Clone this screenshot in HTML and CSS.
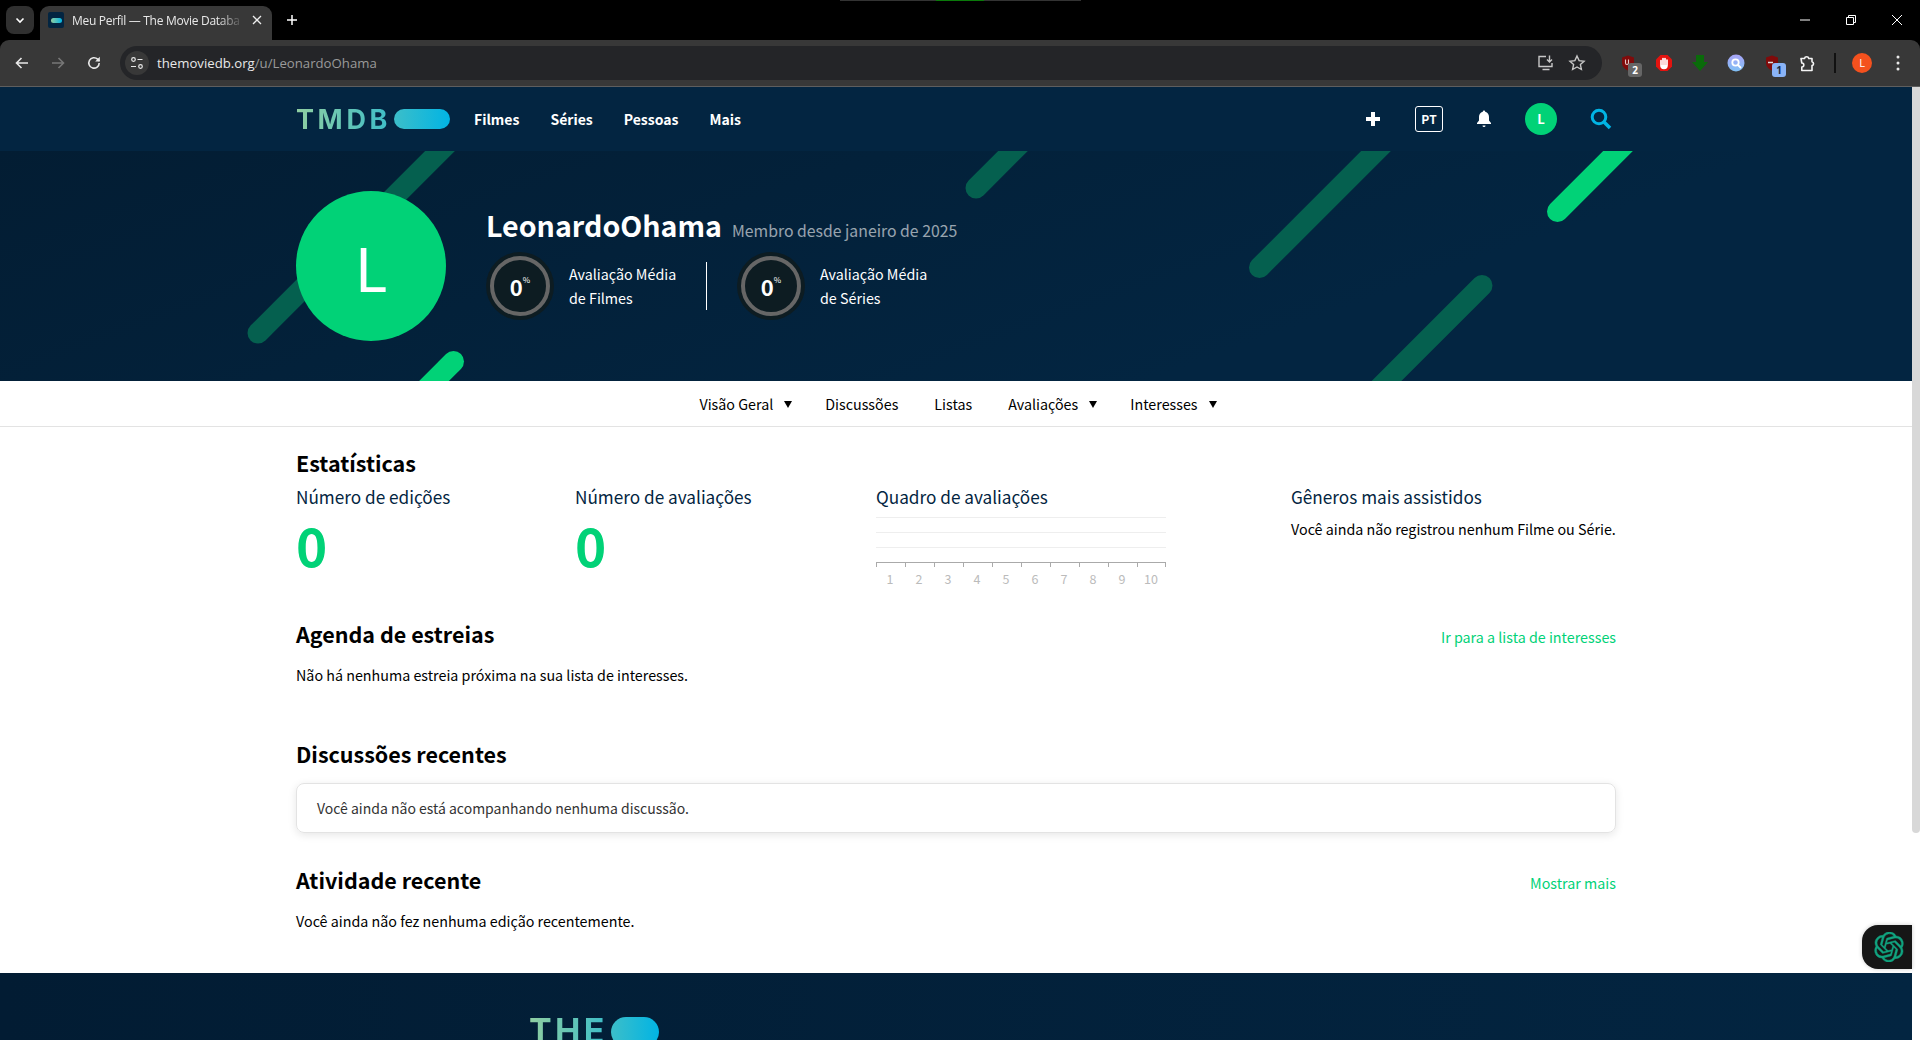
FILE: index.html
```html
<!DOCTYPE html>
<html lang="pt"><head>
<meta charset="utf-8">
<title>Meu Perfil — The Movie Database</title>
<link rel="stylesheet" href="styles.css">
</head>
<body>
<div class="browser">
	<div class="tabstrip">
		<div class="captionline"><i></i></div>
		<div class="tabsearch"><svg width="12" height="12" viewBox="0 0 12 12"><path d="M2.500 4.500 6 8l3.500-3.500" fill="none" stroke="#fff" stroke-width="1.600"/></svg></div>
		<div class="tab">
			<span class="favicon"><i></i></span>
			<span class="tabtitle">Meu Perfil — The Movie Databa</span>
			<svg width="10" height="10" viewBox="0 0 10 10"><path d="M1 1l8 8M9 1l-8 8" stroke="#eee" stroke-width="1.300"/></svg>
		</div>
		<svg class="newtab" width="12" height="12" viewBox="0 0 12 12"><path d="M6 1v10M1 6h10" stroke="#fff" stroke-width="1.500"/></svg>
		<div class="winbtns">
			<svg width="12" height="12" viewBox="0 0 12 12"><path d="M1 6h10" stroke="#fff"/></svg>
			<svg width="12" height="12" viewBox="0 0 12 12"><path d="M1.500 3.500h7v7h-7zM3.500 3.500v-2h7v7h-2" fill="none" stroke="#fff"/></svg>
			<svg width="12" height="12" viewBox="0 0 12 12"><path d="M1 1l10 10M11 1L1 11" stroke="#fff"/></svg>
		</div>
	</div>
	<div class="toolbar">
		<svg class="tbicon" width="16" height="16" viewBox="0 0 16 16"><path d="M14 8H3M7.500 3 2.500 8l5 5" fill="none" stroke="#e8e8e8" stroke-width="1.600"/></svg>
		<svg class="tbicon" width="16" height="16" viewBox="0 0 16 16"><path d="M2 8h11M8.500 3l5 5-5 5" fill="none" stroke="#777" stroke-width="1.600"/></svg>
		<svg class="tbicon" width="16" height="16" viewBox="0 0 16 16"><path d="M13.200 8A5.200 5.200 0 1 1 11.600 4.200L13.400 6" fill="none" stroke="#e8e8e8" stroke-width="1.600"/><path d="M13.800 1.800v4.600H9.200z" fill="#e8e8e8"/></svg>
		<div class="omnibox">
			<span class="siteinfo"><svg width="14" height="14" viewBox="0 0 14 14" fill="none" stroke="#e8e8e8" stroke-width="1.200"><circle cx="3.500" cy="3.500" r="1.800"/><path d="M7.500 3.500h5M1 10.500h5"/><circle cx="10.500" cy="10.500" r="1.800"/></svg></span>
			<span class="url">themoviedb.org<span class="urlpath">/u/LeonardoOhama</span></span>
			<svg class="omni-r" width="18" height="18" viewBox="0 0 18 18" fill="none" stroke="#c7c7c7" stroke-width="1.400"><path d="M9 2.500H2v10h13V9M5.500 15.500h7M12.500 1.500v6M10 5.500l2.500 2.500L15 5.500"/></svg>
			<svg class="omni-r" width="18" height="18" viewBox="0 0 18 18"><path d="M9 2l2.100 4.600 5 .6-3.700 3.400 1 4.900L9 13l-4.400 2.500 1-4.900L1.900 7.200l5-.6z" fill="none" stroke="#c7c7c7" stroke-width="1.400"/></svg>
		</div>
		<div class="extensions">
			<span class="ext">
				<svg width="14" height="16" viewBox="0 0 14 16"><path d="M7 .5l6 2v5.500c0 3.500-2.800 6-6 7.500-3.200-1.500-6-4-6-7.500V2.500z" fill="#800b0b"/><path d="M4.500 4.500v3.500a1.500 1.500 0 0 0 3 0V4.500" fill="none" stroke="#e6c9c9" stroke-width="1.100"/></svg>
				<b class="badge grey">2</b>
			</span>
			<span class="ext">
				<svg width="18" height="18" viewBox="0 0 18 18"><path d="M5.500 1h7L17 5.500v7L12.500 17h-7L1 12.500v-7z" fill="#e3130f"/><path d="M6 12V6.500M8 11V4.500M10 11V4.500M12 11.500V6M6 11c0 3 1.500 3.500 3 3.500s3-1 3-3.500" stroke="#fff" stroke-width="1.700" fill="#fff" stroke-linecap="round"/></svg>
			</span>
			<span class="ext">
				<svg width="18" height="18" viewBox="0 0 18 18"><path d="M5 1h8v7h4l-8 9-8-9h4z" fill="#0a6b0a"/></svg>
			</span>
			<span class="ext">
				<svg width="18" height="18" viewBox="0 0 18 18"><defs><linearGradient id="qg" x1="0" y1="0" x2="0" y2="1"><stop offset="0" stop-color="#a9a4f7"/><stop offset="1" stop-color="#7fc0f5"/></linearGradient></defs><circle cx="9" cy="9" r="8.500" fill="url(#qg)"/><circle cx="8.500" cy="8.500" r="3.200" fill="none" stroke="#fff" stroke-width="1.800"/><path d="M11 11l3 3" stroke="#fff" stroke-width="1.800"/></svg>
			</span>
			<span class="ext">
				<svg width="14" height="16" viewBox="0 0 14 16"><path d="M7 .5l6 2v5.500c0 3.500-2.800 6-6 7.500-3.200-1.500-6-4-6-7.500V2.500z" fill="#800b0b"/><path d="M3 7.500h5" stroke="#ddd" stroke-width="1.500"/></svg>
				<b class="badge blue">1</b>
			</span>
			<span class="ext">
				<svg width="18" height="18" viewBox="0 0 18 18"><path d="M2 4.500h3.500a2.200 2.200 0 0 1 4.300 0H13v3.200a2 2 0 0 1 0 3.900v4.900H2.800v-3.500a2 2 0 0 0 0-4z" fill="none" stroke="#f4f4f4" stroke-width="1.600" stroke-linejoin="round"/></svg>
			</span>
		</div>
		<i class="tbsep"></i>
		<span class="profile">L</span>
		<svg class="kebab" width="4" height="16" viewBox="0 0 4 16"><circle cx="2" cy="2" r="1.500" fill="#e8e8e8"/><circle cx="2" cy="8" r="1.500" fill="#e8e8e8"/><circle cx="2" cy="14" r="1.500" fill="#e8e8e8"/></svg>
	</div>
</div>

<div class="viewport">
	<div class="page">
		<header class="topnav">
			<div class="wrap navrow">
				<div class="logo"><span class="logotext">TMDB</span><i class="pill"></i></div>
				<nav class="mainlinks">
					<a>Filmes</a><a>Séries</a><a>Pessoas</a><a>Mais</a>
				</nav>
				<div class="navright">
					<svg class="plus" width="16" height="16" viewBox="0 0 16 16"><path d="M8 1v14M1 8h14" stroke="#fff" stroke-width="4"/></svg>
					<span class="lang">PT</span>
					<svg class="bell" width="16" height="20" viewBox="0 0 16 20"><path d="M8 1.500c.8 0 1.200.6 1.200 1.300C11.800 3.400 13 5.500 13 8v3.500l2 2.500v1H1v-1l2-2.500V8c0-2.500 1.200-4.600 3.800-5.200 0-.7.400-1.300 1.200-1.300z" fill="#fff"/><path d="M6.500 16.500h3a1.500 1.500 0 0 1-3 0z" fill="#fff"/></svg>
					<span class="navavatar">L</span>
					<svg class="lens" width="22" height="22" viewBox="0 0 22 22"><circle cx="9" cy="9" r="6.800" fill="none" stroke="#01b4e4" stroke-width="3"/><path d="M14 14l6 6" stroke="#01b4e4" stroke-width="3.500"/></svg>
				</div>
			</div>
		</header>

		<section class="hero">
			<svg class="stripes" width="1912" height="230" viewBox="0 0 1912 230">
				<g stroke="#05604f" stroke-width="21" stroke-linecap="round">
					<path d="M470 -30 258 182"/>
					<path d="M1043 -30 976 37"/>
					<path d="M1406 -30 1259.500 116.500"/>
					<path d="M1482 134.500 1362 254.500"/>
				</g>
				<g stroke="#01d277" stroke-width="21" stroke-linecap="round">
					<path d="M1648 -30 1557.500 60.500"/>
					<path d="M453.500 210.500 413.500 250.500"/>
				</g>
			</svg>
			<div class="wrap herorow">
				<div class="bigavatar">L</div>
				<div class="heroinfo">
					<div class="herotitle"><h2>LeonardoOhama</h2><span>Membro desde janeiro de 2025</span></div>
					<div class="scores">
						<div class="score">
							<div class="ring"><div class="ringin">0<sup>%</sup></div></div>
							<div class="scorelabel">Avaliação Média<br>de Filmes</div>
						</div>
						<div class="score second">
							<div class="ring"><div class="ringin">0<sup>%</sup></div></div>
							<div class="scorelabel">Avaliação Média<br>de Séries</div>
						</div>
					</div>
				</div>
			</div>
		</section>

		<nav class="subnav">
			<a class="drop">Visão Geral</a>
			<a>Discussões</a>
			<a>Listas</a>
			<a class="drop">Avaliações</a>
			<a class="drop">Interesses</a>
		</nav>

		<main class="wrap content">
			<h3>Estatísticas</h3>
			<div class="stats">
				<div class="stat col1"><h4>Número de edições</h4><div class="bignum">0</div></div>
				<div class="stat col2"><h4>Número de avaliações</h4><div class="bignum">0</div></div>
				<div class="stat col3">
					<h4>Quadro de avaliações</h4>
					<div class="chart">
						<i></i><i></i><i></i>
						<div class="axis"><span>1</span><span>2</span><span>3</span><span>4</span><span>5</span><span>6</span><span>7</span><span>8</span><span>9</span><span>10</span></div>
					</div>
				</div>
				<div class="stat col4"><h4>Gêneros mais assistidos</h4><p>Você ainda não registrou nenhum Filme ou Série.</p></div>
			</div>

			<div class="sechead agenda"><h3>Agenda de estreias</h3><a>Ir para a lista de interesses</a></div>
			<p class="line">Não há nenhuma estreia próxima na sua lista de interesses.</p>

			<h3 class="disc">Discussões recentes</h3>
			<div class="card">Você ainda não está acompanhando nenhuma discussão.</div>

			<div class="sechead activity"><h3>Atividade recente</h3><a>Mostrar mais</a></div>
			<p class="line">Você ainda não fez nenhuma edição recentemente.</p>
		</main>

		<footer class="footer">
			<div class="footlogo"><span class="logotext">THE</span><i class="pill"></i></div>
		</footer>
	</div>
	<div class="scrollbar"><i></i></div>
	<div class="assistant">
		<svg width="30" height="30" viewBox="0 0 24 24"><path fill="#10a37f" stroke="#10a37f" stroke-width=".3" transform="rotate(15 12 12)" d="M22.2819 9.8211a5.9847 5.9847 0 0 0-.5157-4.9108 6.0462 6.0462 0 0 0-6.5098-2.9A6.0651 6.0651 0 0 0 4.9807 4.1818a5.9847 5.9847 0 0 0-3.9977 2.9 6.0462 6.0462 0 0 0 .7427 7.0966 5.98 5.98 0 0 0 .511 4.9107 6.051 6.051 0 0 0 6.5146 2.9001A5.9847 5.9847 0 0 0 13.2599 24a6.0557 6.0557 0 0 0 5.7718-4.2058 5.9894 5.9894 0 0 0 3.9977-2.9001 6.0557 6.0557 0 0 0-.7475-7.0729zm-9.022 12.6081a4.4755 4.4755 0 0 1-2.8764-1.0408l.1419-.0804 4.7783-2.7582a.7948.7948 0 0 0 .3927-.6813v-6.7369l2.02 1.1686a.071.071 0 0 1 .038.052v5.5826a4.504 4.504 0 0 1-4.4945 4.4944zm-9.6607-4.1254a4.4708 4.4708 0 0 1-.5346-3.0137l.142.0852 4.783 2.7582a.7712.7712 0 0 0 .7806 0l5.8428-3.3685v2.3324a.0804.0804 0 0 1-.0332.0615L9.74 19.9502a4.4992 4.4992 0 0 1-6.1408-1.6464zM2.3408 7.8956a4.485 4.485 0 0 1 2.3655-1.9728V11.6a.7664.7664 0 0 0 .3879.6765l5.8144 3.3543-2.0201 1.1685a.0757.0757 0 0 1-.071 0l-4.8303-2.7865A4.504 4.504 0 0 1 2.3408 7.872zm16.5963 3.8558L13.1038 8.364 15.1192 7.2a.0757.0757 0 0 1 .071 0l4.8303 2.7913a4.4944 4.4944 0 0 1-.6765 8.1042v-5.6772a.79.79 0 0 0-.407-.667zm2.0107-3.0231l-.142-.0852-4.7735-2.7818a.7759.7759 0 0 0-.7854 0L9.409 9.2297V6.8974a.0662.0662 0 0 1 .0284-.0615l4.8303-2.7866a4.4992 4.4992 0 0 1 6.6802 4.66zM8.3065 12.863l-2.02-1.1638a.0804.0804 0 0 1-.038-.0567V6.0742a4.4992 4.4992 0 0 1 7.3757-3.4537l-.142.0805L8.704 5.459a.7948.7948 0 0 0-.3927.6813zm1.0976-2.3654l2.602-1.4998 2.6069 1.4998v2.9994l-2.5974 1.4997-2.6067-1.4997Z"/></svg>
	</div>
</div>
</body></html>
```

FILE: styles.css
```css
*{box-sizing:border-box;}
html,body{margin:0;padding:0;height:100%;overflow:hidden;background:#fff;}
body{font-family:"Noto Sans CJK SC","Noto Sans",sans-serif;font-size:14.300px;color:#000;}
h2,h3,h4,p{margin:0;}

/* browser chrome */
.browser{height:87px;background:#000;font-family:"Open Sans","Noto Sans",sans-serif;border-bottom:1px solid #5e5e5e;}
.tabstrip{height:40px;display:flex;align-items:flex-end;padding-left:6px;position:relative;}
.captionline{position:absolute;left:840px;top:0;width:241px;height:1px;background:#333;}
.captionline i{display:block;width:48px;height:1px;margin-left:96px;background:#0a7a0a;}
.tabsearch{width:28px;height:28px;margin-bottom:6px;background:#303030;border-radius:8px;display:flex;align-items:center;justify-content:center;}
.tab{width:232px;height:34px;margin-left:6px;background:#383838;border-radius:9px 9px 0 0;display:flex;align-items:center;padding:0 10px 6px 8px;color:#e8e8e8;font-size:12px;}
.favicon{width:16px;height:16px;background:#032541;border-radius:2px;display:flex;align-items:center;justify-content:center;margin-right:8px;flex:none;}
.favicon i{width:11px;height:5px;border-radius:3px;background:linear-gradient(90deg,#90cea1,#01b4e4);}
.tabtitle{flex:1;white-space:nowrap;overflow:hidden;letter-spacing:-.3px;-webkit-mask-image:linear-gradient(90deg,#000 85%,transparent);mask-image:linear-gradient(90deg,#000 85%,transparent);margin-right:8px;}
.newtab{margin:0 0 14px 14px;}
.winbtns{margin-left:auto;display:flex;gap:34px;padding:0 17px 14px 0;}
.toolbar{height:46px;background:#383838;border-radius:9px 9px 0 0;display:flex;align-items:center;padding:0 0 0 14px;}
.tbicon{margin-right:20px;flex:none;}
.omnibox{width:1482px;height:34px;margin-left:-2px;background:#242528;border-radius:17px;display:flex;align-items:center;padding:0 16px 0 5px;}
.siteinfo{width:24px;height:24px;border-radius:12px;background:#383838;display:flex;align-items:center;justify-content:center;}
.url{margin-left:8px;font-size:13.200px;color:#e8e8e8;flex:1;}
.urlpath{color:#9a9a9a;}
.omni-r{margin-left:13px;}
.extensions{display:flex;margin-left:8px;}
.ext{width:36px;height:24px;display:flex;align-items:center;justify-content:center;position:relative;}
.badge{position:absolute;left:18px;top:12px;width:14px;height:14px;border-radius:3px;font-size:10px;line-height:14px;text-align:center;font-weight:bold;}
.badge.grey{background:#666;color:#fff;}
.badge.blue{background:#8ab4f8;color:#1c2a44;}
.tbsep{width:2px;height:20px;background:#111;margin:0 0 0 8px;}
.profile{width:20px;height:20px;border-radius:10px;background:#f4511e;color:#fff;font-size:11px;line-height:20px;text-align:center;margin-left:16px;}
.kebab{margin-left:24px;}

/* page */
.viewport{height:953px;position:relative;overflow:hidden;}
.page{width:1912px;}
.wrap{width:1320px;margin-left:296px;}
.topnav{height:64px;background:#032541;}
.navrow{display:flex;align-items:center;height:100%;}
.logo{display:flex;align-items:center;width:178px;}
.logotext{font-family:"Inter","Noto Sans",sans-serif;font-weight:700;background:linear-gradient(90deg,#90cea1,#3cbec9);-webkit-background-clip:text;background-clip:text;color:transparent;}
.logo .logotext{font-size:27px;letter-spacing:3.600px;}
.pill{display:block;border-radius:20px;background:linear-gradient(90deg,#3cbec9,#01b4e4);}
.logo .pill{width:56px;height:20px;margin-left:3px;}
.mainlinks{display:flex;gap:31px;}
.mainlinks a{color:#fff;font-weight:700;font-size:14px;}
.navright{margin-left:auto;display:flex;align-items:center;height:100%;}
.plus{margin-right:34px;}
.lang{width:28px;height:26px;border:1px solid #fff;border-radius:3px;color:#fff;font-size:12px;font-weight:700;text-align:center;line-height:23px;margin-right:33px;}
.bell{margin-right:33px;}
.navavatar{width:32px;height:32px;border-radius:16px;background:#01d277;color:#fff;font-size:13px;font-weight:700;text-align:center;line-height:31px;margin-right:33px;}
.lens{margin-right:4px;}

.hero{height:230px;position:relative;overflow:hidden;background:linear-gradient(160deg,#031d33 0%,#032541 70%);}
.stripes{position:absolute;left:0;top:0;}
.herorow{position:relative;display:flex;align-items:center;height:100%;}
.bigavatar{width:150px;height:150px;border-radius:75px;background:#01d277;color:#fff;font-size:60px;text-align:center;line-height:150px;flex:none;}
.heroinfo{margin:0 0 7px 40px;}
.herotitle{display:flex;align-items:baseline;color:#fff;}
.herotitle h2{font-size:28.600px;font-weight:700;line-height:40px;}
.herotitle span{font-size:15.800px;color:rgba(255,255,255,.6);margin-left:10px;}
.scores{display:flex;margin-top:7px;}
.score{display:flex;align-items:center;color:#fff;}
.ring{width:68px;height:68px;border-radius:34px;background:#0d1c22;padding:4px;}
.ringin{width:60px;height:60px;border-radius:30px;border:4px solid #666;background:#0d1c22;color:#fff;font-size:22px;font-weight:700;display:flex;align-items:center;justify-content:center;}
.ringin sup{font-size:8px;margin-top:-12px;line-height:1;font-weight:400;}
.scorelabel{line-height:24px;margin-left:15px;width:137px;height:48px;}
.score:first-child .scorelabel{border-right:1px solid #fff;width:138px;margin-right:30px;}

.subnav{height:46px;display:flex;justify-content:center;align-items:center;gap:36px;border-bottom:1px solid #e3e3e3;padding:0 0 1px 1px;}
.subnav a{color:#000;}
.drop{margin-right:-3px;}
.drop::after{content:"";display:inline-block;margin-left:11px;vertical-align:2px;border-left:4px solid transparent;border-right:4px solid transparent;border-top:7px solid #000;}

.content{padding-top:19px;}
.content h3{font-size:21.500px;font-weight:700;line-height:34px;}
.stats{display:flex;}
.stat h4{font-size:17.200px;font-weight:400;color:#032541;line-height:26px;margin-top:4px;}
.col1{width:279px;}
.col2{width:301px;}
.col3{width:415px;}
.col4{flex:1;}
.col4 p{margin-top:7px;line-height:24px;}
.bignum{color:#01d277;font-size:53px;font-weight:700;line-height:72px;margin-top:-2px;}
.chart{width:290px;margin-top:7px;}
.chart i{display:block;height:15px;border-top:1px solid #eee;}
.axis{display:flex;border-top:1px solid #aaa;height:24px;}
.axis span{flex:1;text-align:center;color:#bbb;font-size:12.500px;padding:6px 1px 0 0;position:relative;}
.axis span::before{content:"";position:absolute;left:0;top:0;height:4px;border-left:1px solid #aaa;}
.axis span:last-child::after{content:"";position:absolute;right:0;top:0;height:4px;border-left:1px solid #aaa;}

.sechead{display:flex;justify-content:space-between;align-items:center;}
.sechead a{color:#01d277;position:relative;top:2px;}
.agenda{margin-top:31px;}
.line{line-height:24px;}
.agenda + .line{margin-top:12px;}
.disc{margin-top:50px;}
.card{height:50px;margin-top:12px;border:1px solid #e3e3e3;border-radius:8px;box-shadow:0 2px 8px rgba(0,0,0,.1);padding:0 20px;line-height:48px;color:#333;font-size:14px;}
.activity{margin-top:30px;}
.activity + .line{margin-top:12px;}

.footer{margin-top:40px;height:200px;background:linear-gradient(90deg,#021c33,#032541);padding:44px 0 0 529px;}
.footlogo{display:flex;align-items:flex-start;}
.footlogo .logotext{font-size:34px;line-height:28px;letter-spacing:3.300px;}
.footlogo .pill{width:48px;height:30px;margin-left:3px;}

.scrollbar{position:absolute;right:0;top:0;bottom:0;width:8px;background:#fff;}
.scrollbar i{display:block;height:746px;background:#d8d8d8;border-radius:0 0 4px 4px;}
.assistant{position:absolute;right:8px;top:838px;width:50px;height:44px;background:#161616;border-radius:16px 0 0 16px;display:flex;align-items:center;padding-left:12px;box-shadow:0 0 4px rgba(0,0,0,.2);}
```
